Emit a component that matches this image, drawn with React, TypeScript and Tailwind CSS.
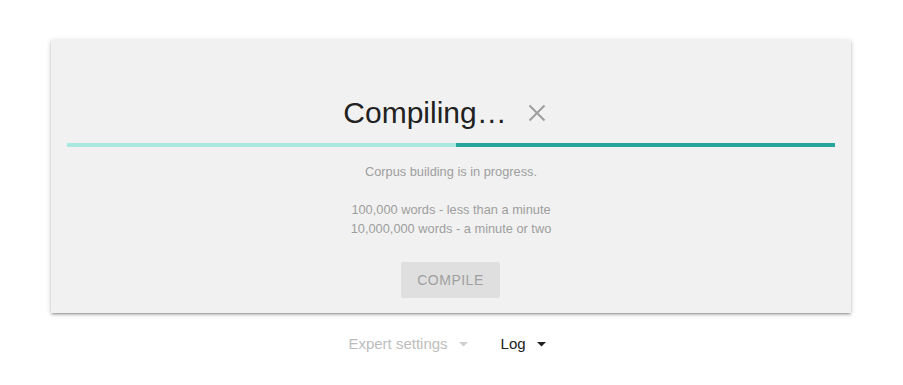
import React from "react";

function Caret({ className }: { className: string }) {
  return (
    <svg width="9" height="5" viewBox="0 0 9 5" className={className}>
      <path d="M0 0 L9 0 L4.5 4.5 Z" fill="currentColor" />
    </svg>
  );
}

export default function App() {
  return (
    <div
      className="w-[903px] h-[385px] bg-white flex flex-col items-center pt-[40px] pr-[1px]"
      style={{ fontFamily: '"Liberation Sans", Arial, sans-serif' }}
    >
      <div className="w-[800px] h-[273px] bg-[#f1f1f1] shadow-[0_2px_2px_0_rgba(0,0,0,0.14),0_3px_1px_-2px_rgba(0,0,0,0.12),0_1px_5px_0_rgba(0,0,0,0.2)] px-[16px] pt-[55px] flex flex-col items-center">
        <div className="flex items-center justify-center pr-[13px] h-[36px]">
          <span className="text-[30px] leading-[36px] text-[#212121]">Compiling…</span>
          <svg width="18" height="18" viewBox="0 0 18 18" className="ml-[21px] text-[#9e9e9e]">
            <path d="M1.5 1.5 L16.5 16.5 M16.5 1.5 L1.5 16.5" stroke="currentColor" strokeWidth="2" />
          </svg>
        </div>
        <div className="w-full h-[4px] mt-[12px] flex bg-[#a9e9e2]">
          <div className="w-[389px] h-full bg-[#a9e9e2]" />
          <div className="flex-1 h-full bg-[#26a69a]" />
        </div>
        <div className="mt-[15px] text-[12.8px] leading-[19px] text-[#9e9e9e] text-center">
          <div>Corpus building is in progress.</div>
          <div className="mt-[19px]">100,000 words - less than a minute</div>
          <div>10,000,000 words - a minute or two</div>
        </div>
        <div className="mt-[24px] mr-[1px] w-[99px] h-[36px] bg-[#dfdfdf] rounded-[2px] flex items-center justify-center text-[14px] tracking-[0.5px] text-[#9f9f9f]">
          COMPILE
        </div>
      </div>
      <div className="mt-[21px] flex items-center text-[15px] leading-[20px] pr-[8px]">
        <span className="text-[#bdbdbd]">Expert settings</span>
        <Caret className="ml-[11px] text-[#d0d0d0]" />
        <span className="ml-[33px] text-[#212121]">Log</span>
        <Caret className="ml-[11px] text-[#212121]" />
      </div>
    </div>
  );
}
